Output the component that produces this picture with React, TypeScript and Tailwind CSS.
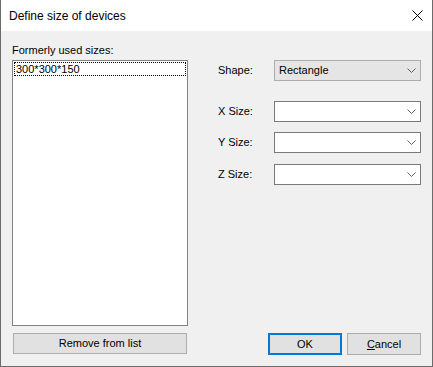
import React from "react";

const Chevron = () => (
  <svg width="9" height="5" viewBox="0 0 9 5" className="shrink-0">
    <path d="M0.5 0.5 L4.5 4.5 L8.5 0.5" fill="none" stroke="#606060" strokeWidth="1" />
  </svg>
);

type ComboProps = { value?: string; filled?: boolean };

const Combo = ({ value, filled }: ComboProps) => (
  <div
    className={
      filled
        ? "w-[147px] h-[21px] flex items-center justify-between pl-[4px] pr-[4px] bg-[#e5e5e5] border border-[#adadad]"
        : "w-[147px] h-[21px] flex items-center justify-between pl-[4px] pr-[4px] bg-white border border-[#7a7a7a]"
    }
  >
    <span className="text-[11px] leading-[13px] text-black">{value}</span>
    <Chevron />
  </div>
);

const Row = ({ label, children, className }: { label: string; children: React.ReactNode; className?: string }) => (
  <div className={"flex items-center " + (className ?? "")}>
    <span className="w-[56px] text-[11px] leading-[13px] text-black">{label}</span>
    {children}
  </div>
);

export default function App() {
  return (
    <div
      className="w-[433px] h-[367px] flex flex-col border-x border-b border-[#6b6b6b] bg-[#f0f0f0] overflow-hidden"
      style={{ fontFamily: '"Liberation Sans", Arial, sans-serif' }}
    >
      {/* Title bar */}
      <div className="h-[31px] bg-white flex items-center justify-between pl-[8px] pr-[9px] shrink-0">
        <span className="text-[12px] text-black" style={{ fontFamily: '"Liberation Sans", Arial, sans-serif' }}>
          Define size of devices
        </span>
        <svg width="11" height="11" viewBox="0 0 11 11">
          <path d="M0.5 0.5 L10.5 10.5 M10.5 0.5 L0.5 10.5" stroke="#000" strokeWidth="1" />
        </svg>
      </div>

      {/* Body */}
      <div className="flex-1 flex pl-[11px] pr-[11px] pt-[13px] pb-[11px]">
        {/* Left column */}
        <div className="w-[176px] flex flex-col">
          <span className="h-[13px] text-[11px] leading-[13px] text-black">Formerly used sizes:</span>
          <div className="mt-[3px] h-[266px] bg-white border border-[#828282] p-px">
            <div className="h-[14px] border border-dotted border-black flex items-center pl-[1px]">
              <span className="text-[11px] leading-[13px] text-black">300*300*150</span>
            </div>
          </div>
          <button className="mt-[7px] ml-px w-[174px] h-[21px] bg-[#e1e1e1] border border-[#adadad] text-[11px] leading-[13px] text-black">
            Remove from list
          </button>
        </div>

        {/* Right column */}
        <div className="ml-[30px] flex-1 flex flex-col pt-[16px]">
          <Row label="Shape:">
            <Combo value="Rectangle" filled />
          </Row>
          <Row label="X Size:" className="mt-[20px]">
            <Combo />
          </Row>
          <Row label="Y Size:" className="mt-[10px]">
            <Combo />
          </Row>
          <Row label="Z Size:" className="mt-[11px]">
            <Combo />
          </Row>

          <div className="mt-auto flex justify-end gap-[5px]">
            <button className="w-[74px] h-[22px] bg-[#e1e1e1] border-2 border-[#0078d7] text-[11px] leading-[13px] text-black">
              OK
            </button>
            <button className="w-[74px] h-[22px] bg-[#e1e1e1] border border-[#adadad] text-[11px] leading-[13px] text-black">
              <span className="underline">C</span>ancel
            </button>
          </div>
        </div>
      </div>
    </div>
  );
}
